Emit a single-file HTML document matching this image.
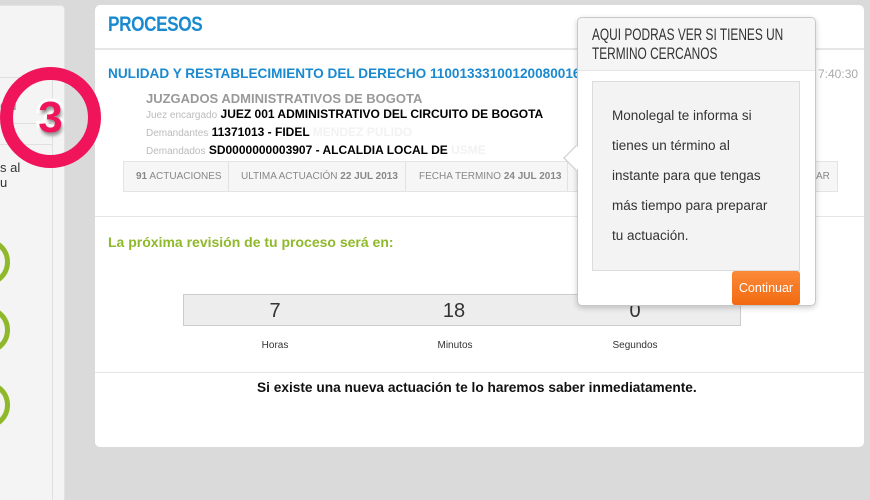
<!DOCTYPE html>
<html><head><meta charset="utf-8"><style>
*{margin:0;padding:0;box-sizing:border-box}
body{width:870px;height:500px;overflow:hidden;background:#dadada;font-family:"Liberation Sans",sans-serif;position:relative}
.abs{position:absolute}
</style></head><body>
<!-- left panel -->
<div class="abs" style="left:-10px;top:5px;width:75px;height:495px;background:#f4f4f4;border:1px solid #e2e2e2;border-bottom:none;border-radius:4px 4px 0 0"></div>
<div class="abs" style="left:52px;top:77px;width:1px;height:423px;background:#e0e0e0"></div>
<div class="abs" style="left:0;top:77px;width:65px;height:1px;background:#e0e0e0"></div>
<div class="abs" style="left:0;top:123px;width:52px;height:1px;background:#e0e0e0"></div>
<div class="abs" style="left:0;top:144px;width:52px;height:1px;background:#e0e0e0"></div>
<div class="abs" style="left:0;top:101px;font-size:11px;color:#888">ON</div>
<div class="abs" style="left:0;top:160px;font-size:13px;color:#333;line-height:15px">s al<br>u</div>
<div class="abs" style="left:-38px;top:238px;width:48px;height:48px;border:5px solid #8fb92a;border-radius:50%"></div>
<div class="abs" style="left:-38px;top:306px;width:48px;height:48px;border:5px solid #8fb92a;border-radius:50%"></div>
<div class="abs" style="left:-38px;top:381px;width:48px;height:48px;border:5px solid #8fb92a;border-radius:50%"></div>
<!-- main panel -->
<div class="abs" style="left:95px;top:5px;width:769px;height:442px;background:#fff;border-radius:5px"></div>
<div class="abs" style="left:108px;top:13px;font-size:21px;font-weight:bold;color:#1a8ad0;transform:scaleX(.82);transform-origin:left;letter-spacing:-.5px">PROCESOS</div>
<div class="abs" style="left:95px;top:48px;width:769px;height:2px;background:#e6e6e6"></div>
<div class="abs" style="left:108px;top:66px;font-size:13.6px;font-weight:bold;color:#1a8ad0;white-space:nowrap">NULIDAD Y RESTABLECIMIENTO DEL DERECHO 11001333100120080016</div>
<div class="abs" style="left:818px;top:67px;font-size:12px;color:#aaa">7:40:30</div>
<div class="abs" style="left:146px;top:91px;font-size:13px;font-weight:bold;color:#999">JUZGADOS ADMINISTRATIVOS DE BOGOTA</div>
<div class="abs" style="left:146px;top:106px;font-size:12px;color:#000;white-space:nowrap;line-height:16px"><span style="color:#bbb;font-size:10px">Juez encargado</span> <b>JUEZ 001 ADMINISTRATIVO DEL CIRCUITO DE BOGOTA</b><br><span style="color:#bbb;font-size:10px">Demandantes</span> <b>11371013 - FIDEL <span style="color:#f2f2f2">MENDEZ PULIDO</span></b><br><span style="color:#bbb;font-size:10px">Demandados</span> <b>SD0000000003907 - ALCALDIA LOCAL DE <span style="color:#f2f2f2">USME</span></b></div>
<div class="abs" style="left:123px;top:161px;width:715px;height:31px;background:#f6f6f6;border:1px solid #e4e4e4;font-size:10px;color:#888;line-height:29px">
<span class="abs" style="left:12px"><b>91</b> ACTUACIONES</span>
<span class="abs" style="left:104px;top:0;width:1px;height:29px;background:#e2e2e2"></span>
<span class="abs" style="left:117px">ULTIMA ACTUACIÓN <b>22 JUL 2013</b></span>
<span class="abs" style="left:281px;top:0;width:1px;height:29px;background:#e2e2e2"></span>
<span class="abs" style="left:295px">FECHA TERMINO <b>24 JUL 2013</b></span>
<span class="abs" style="left:443px;top:0;width:1px;height:29px;background:#e2e2e2"></span>
<span class="abs" style="left:692px">AR</span>
</div>
<div class="abs" style="left:95px;top:216px;width:769px;height:1px;background:#e6e6e6"></div>
<div class="abs" style="left:108px;top:234px;font-size:14px;font-weight:bold;color:#8fb92a">La próxima revisión de tu proceso será en:</div>
<div class="abs" style="left:183px;top:294px;width:558px;height:32px;background:#ededed;border:1px solid #ccc"></div>
<div class="abs" style="left:255px;top:300px;width:40px;text-align:center;font-size:20px;color:#333">7</div>
<div class="abs" style="left:434px;top:300px;width:40px;text-align:center;font-size:20px;color:#333">18</div>
<div class="abs" style="left:615px;top:300px;width:40px;text-align:center;font-size:20px;color:#333">0</div>
<div class="abs" style="left:245px;top:340px;width:60px;text-align:center;font-size:10px;color:#333">Horas</div>
<div class="abs" style="left:425px;top:340px;width:60px;text-align:center;font-size:10px;color:#333">Minutos</div>
<div class="abs" style="left:605px;top:340px;width:60px;text-align:center;font-size:10px;color:#333">Segundos</div>
<div class="abs" style="left:95px;top:372px;width:769px;height:1px;background:#e6e6e6"></div>
<div class="abs" style="left:257px;top:380px;font-size:13.7px;font-weight:bold;color:#111;white-space:nowrap">Si existe una nueva actuación te lo haremos saber inmediatamente.</div>
<!-- badge -->
<div class="abs" style="left:0;top:67px;width:101px;height:101px;border:13px solid #f0145a;border-radius:50%"></div>
<div class="abs" style="left:22px;top:90px;width:57px;text-align:center;font-size:44px;font-weight:bold;color:#f0145a;line-height:56px;-webkit-text-stroke:6px #fff;paint-order:stroke fill;text-shadow:1px 3px 3px rgba(0,0,0,.45)">3</div>
<!-- popover -->
<div class="abs" style="left:577px;top:17px;width:239px;height:289px;background:#fff;border:1px solid #c8c8c8;border-radius:5px;box-shadow:0 2px 6px rgba(0,0,0,.2)"></div>
<div class="abs" style="left:567px;top:149px;width:18px;height:18px;background:#fff;border-left:1px solid #c8c8c8;border-bottom:1px solid #c8c8c8;transform:rotate(45deg)"></div>
<div class="abs" style="left:578px;top:18px;width:237px;height:53px;background:#f5f5f5;border-bottom:1px solid #e4e4e4;border-radius:5px 5px 0 0"></div>
<div class="abs" style="left:592px;top:26px;font-size:16.5px;color:#333;line-height:19px;transform:scaleX(.72);transform-origin:left;white-space:nowrap">AQUI PODRAS VER SI TIENES UN<br>TERMINO CERCANOS</div>
<div class="abs" style="left:592px;top:81px;width:208px;height:190px;background:#f3f3f3;border:1px solid #dcdcdc"></div>
<div class="abs" style="left:612px;top:101px;font-size:13.5px;color:#333;line-height:30px">Monolegal te informa si<br>tienes un término al<br>instante para que tengas<br>más tiempo para preparar<br>tu actuación.</div>
<div class="abs" style="left:732px;top:271px;width:68px;height:34px;background:linear-gradient(#fb8a3a,#f26a10);border-radius:3px;color:#fff;font-size:12.5px;text-align:center;line-height:34px">Continuar</div>
</body></html>
